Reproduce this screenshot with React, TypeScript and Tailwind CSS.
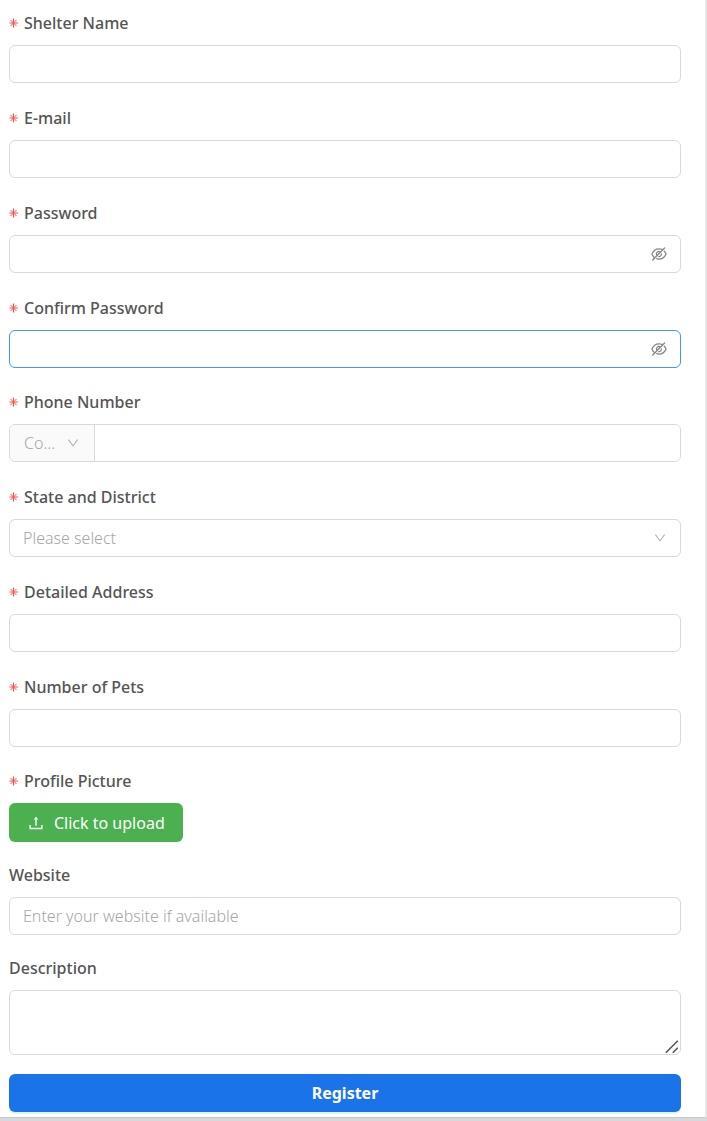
import { AiOutlineDown, AiOutlineEyeInvisible, AiOutlineUpload } from "react-icons/ai";
import type { ReactNode } from "react";

const control =
  "block h-[38px] w-full rounded-md border border-[#d9d9d9] bg-white px-[13px] text-base text-[#333] outline-none placeholder:font-light placeholder:text-[#a6a6a6]";
const focused =
  "block h-[38px] w-full rounded-md border border-[#4096ff] bg-white px-[13px] text-base text-[#333] outline-none";

function Field({ id, label, required, children }: { id: string; label: string; required?: boolean; children: ReactNode }) {
  return (
    <div className="flex flex-col items-stretch gap-[9px]">
      <label htmlFor={id} className="flex h-[26px] items-center text-base font-medium text-[#555]">
        {required && (
          <svg viewBox="0 0 10 10" className="mr-[5px] h-2.5 w-2.5" fill="none" stroke="#ff4d4f" aria-hidden="true">
            <path d="M4.5 .5v9M.5 5h8.5" strokeWidth="1.1" />
            <path d="M1.5 2L7.5 8M7.5 2L1.5 8" strokeWidth="1" />
          </svg>
        )}
        {label}
      </label>
      {children}
    </div>
  );
}

function PasswordInput({ id, active }: { id: string; active?: boolean }) {
  return (
    <div className="relative">
      <input id={id} type="password" className={active ? focused : control} />
      <button type="button" aria-label="Show password" className="absolute inset-y-0 right-[13px] flex items-center text-[#858585]">
        <AiOutlineEyeInvisible size={18} />
      </button>
    </div>
  );
}

function SelectArrow() {
  return <AiOutlineDown size={14} className="pointer-events-none absolute inset-y-0 right-3.5 my-auto text-[#b4b4b4]" />;
}

export default function App() {
  return (
    <div className="border-b-3 border-[#d8d8dc] bg-white font-['Noto_Sans','Open_Sans',sans-serif]">
      <form
        className="border-r-2 border-b border-r-[#e8e8e8] border-b-[#c6c6ca] pt-2.5 pr-6 pb-[5px] pl-[9px]"
        onSubmit={(e) => e.preventDefault()}
      >
        <div className="flex flex-col gap-[21px]">
          <div className="flex flex-col gap-[22px]">
            <Field id="name" label="Shelter Name" required>
              <input id="name" type="text" className={control} />
            </Field>
            <Field id="email" label="E-mail" required>
              <input id="email" type="email" className={control} />
            </Field>
            <Field id="password" label="Password" required>
              <PasswordInput id="password" />
            </Field>
            <Field id="confirm" label="Confirm Password" required>
              <PasswordInput id="confirm" active />
            </Field>
          </div>
          <div className="flex flex-col gap-[22px]">
            <Field id="phone" label="Phone Number" required>
              <div className="flex h-[38px] overflow-hidden rounded-md border border-[#d9d9d9]">
                <div className="relative w-[85px] shrink-0 border-r border-[#d9d9d9] bg-[#fafafa]">
                  <select aria-label="Country code" className="h-full w-full appearance-none pl-3.5 text-base font-light text-[#a6a6a6] outline-none">
                    <option>Co...</option>
                  </select>
                  <SelectArrow />
                </div>
                <input id="phone" type="tel" className="min-w-0 flex-1 bg-white px-[13px] text-base outline-none" />
              </div>
            </Field>
            <Field id="state" label="State and District" required>
              <div className="relative">
                <select id="state" className="block h-[38px] w-full appearance-none rounded-md border border-[#d9d9d9] bg-white px-[13px] text-base font-light text-[#a6a6a6] outline-none">
                  <option>Please select</option>
                </select>
                <SelectArrow />
              </div>
            </Field>
            <Field id="address" label="Detailed Address" required>
              <input id="address" type="text" className={control} />
            </Field>
            <Field id="pets" label="Number of Pets" required>
              <input id="pets" type="text" inputMode="numeric" className={control} />
            </Field>
          </div>
          <div className="flex flex-col gap-5">
            <Field id="picture" label="Profile Picture" required>
              <button
                id="picture"
                type="button"
                className="flex h-[39px] items-center gap-[9px] self-start rounded-md bg-[#4caf50] px-[18px] text-base text-white"
              >
                <AiOutlineUpload size={18} />
                Click to upload
              </button>
            </Field>
            <Field id="website" label="Website">
              <input id="website" type="url" placeholder="Enter your website if available" className={control} />
            </Field>
            <Field id="description" label="Description">
              <div className="relative">
                <textarea id="description" className="block h-[65px] w-full resize-none rounded-md border border-[#d9d9d9] bg-white px-[13px] py-1.5 text-base outline-none" />
                <svg viewBox="0 0 14 14" className="pointer-events-none absolute right-0.5 bottom-px h-3.5 w-3.5" fill="none" stroke="#555" strokeWidth="1.6">
                  <path d="M.8 12.8L12.8 .8M7.8 12.8L12.8 7.8" />
                </svg>
              </div>
            </Field>
          </div>
        </div>
        <button
          type="submit"
          className="mt-[19px] h-[38px] w-full rounded-md bg-[#1a73e8] text-base font-bold text-white shadow-[0_2px_0_rgba(5,145,255,0.1)]"
        >
          Register
        </button>
      </form>
    </div>
  );
}
